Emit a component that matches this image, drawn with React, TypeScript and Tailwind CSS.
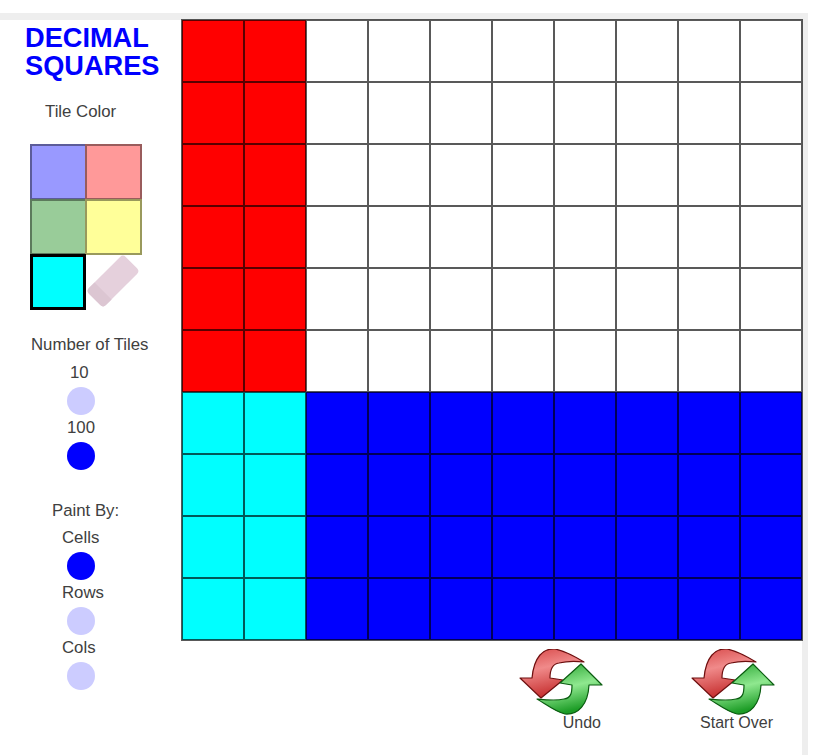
import React from "react";

const font = "font-['Liberation_Sans',Arial,sans-serif]";

const colors = ["bg-[#9999ff]", "bg-[#ff9999]", "bg-[#99cc99]", "bg-[#ffff99]"];

const cellColor = (row: number, col: number) => {
  if (row < 6) return col < 2 ? "bg-[#ff0000]" : "bg-white";
  return col < 2 ? "bg-[#00ffff]" : "bg-[#0000ff]";
};

const Dot = ({ on, className }: { on?: boolean; className?: string }) => (
  <div
    className={`w-7 h-7 rounded-full ml-[67px] ${on ? "bg-[#0000ff]" : "bg-[#ccccff]"} ${className ?? ""}`}
  />
);

const Label = ({ text, className }: { text: string; className?: string }) => (
  <div className={`text-[16.8px] leading-[20px] text-[#404040] whitespace-nowrap ${className ?? ""}`}>
    {text}
  </div>
);

const Eraser = () => (
  <svg viewBox="0 0 56 56" className="w-14 h-14">
    <g transform="rotate(-45 27 27)">
      <rect x="1" y="15" width="52" height="24" rx="4" fill="#e5d0dc" />
      <path d="M1 19a4 4 0 0 1 4-4h8v24H5a4 4 0 0 1-4-4z" fill="#dcc6d2" />
    </g>
  </svg>
);

const Arrows = ({ id }: { id: string }) => (
  <svg viewBox="0 0 84 66" className="w-[84px] h-[66px] block">
    <defs>
      <linearGradient id={`${id}r`} x1="0" y1="0" x2="0.3" y2="1">
        <stop offset="0" stopColor="#d64545" />
        <stop offset="0.45" stopColor="#f08a8a" />
        <stop offset="1" stopColor="#c62f2f" />
      </linearGradient>
      <linearGradient id={`${id}g`} x1="0" y1="0" x2="0.3" y2="1">
        <stop offset="0" stopColor="#1c9c26" />
        <stop offset="0.55" stopColor="#8fe88f" />
        <stop offset="1" stopColor="#1c9c26" />
      </linearGradient>
    </defs>
    <path
      d="M65 13C55 7 46 2 36 0C24 -1 15 8 13 29L1 29L22 49L44 31L31 29C31 21 33 15 40 14C48 12 57 12 65 13Z"
      fill={`url(#${id}r)`}
      stroke="#6e0f0f"
      strokeWidth="1.2"
      strokeLinejoin="round"
    />
    <path
      d="M18 50C28 56 37 63 46 65C59 66 69 56 70 36L83 36L62 15L41 34L53 36C53 44 52 49 45 50C37 52 28 51 18 50Z"
      fill={`url(#${id}g)`}
      stroke="#0a5c10"
      strokeWidth="1.2"
      strokeLinejoin="round"
    />
  </svg>
);

const ActionButton = ({ id, text }: { id: string; text: string }) => (
  <div className="w-[84px] flex flex-col">
    <Arrows id={id} />
    <div className="text-[16px] leading-[20px] text-[#404040] text-right pr-[2px] whitespace-nowrap mt-[-2px]">
      {text}
    </div>
  </div>
);

export default function App() {
  return (
    <div className={`bg-white h-[755px] w-[817px] overflow-hidden pt-[13px] ${font}`}>
      <div className="w-[808px] h-[742px] border-t-[7px] border-r-[6px] border-[#eeeeee] flex">
        <div className="w-[182px] shrink-0 flex flex-col">
          <h1 className="ml-[25px] mt-[4px] text-[27.2px] leading-[28px] font-bold text-[#0000ff]">
            DECIMAL
            <br />
            SQUARES
          </h1>
          <Label text="Tile Color" className="ml-[45px] mt-[22px]" />
          <div className="ml-[30px] mt-[22px] w-[112px] grid grid-cols-[55px_55px] grid-rows-[55px_55px_56px]">
            {colors.map((c) => (
              <div key={c} className={`w-[57px] h-[56px] border-2 border-[#00000066] ${c}`} />
            ))}
            <div className="w-14 h-14 border-[3px] border-black bg-[#00ffff] z-10" />
            <div className="ml-[1px]">
              <Eraser />
            </div>
          </div>
          <Label text="Number of Tiles" className="ml-[31px] mt-[25px]" />
          <Label text="10" className="ml-[70px] mt-[8px]" />
          <Dot className="mt-[4px]" />
          <Label text="100" className="ml-[67px] mt-[3px]" />
          <Dot on className="mt-[4px]" />
          <Label text="Paint By:" className="ml-[52px] mt-[31px]" />
          <Label text="Cells" className="ml-[62px] mt-[7px]" />
          <Dot on className="mt-[4px]" />
          <Label text="Rows" className="ml-[62px] mt-[3px]" />
          <Dot className="mt-[4px]" />
          <Label text="Cols" className="ml-[62px] mt-[3px]" />
          <Dot className="mt-[4px]" />
        </div>
        <div className="flex flex-col">
          <div className="w-[620px] h-[620px] grid grid-cols-10 outline outline-1 outline-[#000000a6]">
            {Array.from({ length: 100 }, (_, i) => (
              <div
                key={i}
                className={`h-[62px] border border-[#000000a6] ${cellColor(Math.floor(i / 10), i % 10)}`}
              />
            ))}
          </div>
          <div className="flex gap-[88px] ml-[337px] mt-[9px]">
            <ActionButton id="undo" text="Undo" />
            <ActionButton id="over" text="Start Over" />
          </div>
        </div>
      </div>
    </div>
  );
}
